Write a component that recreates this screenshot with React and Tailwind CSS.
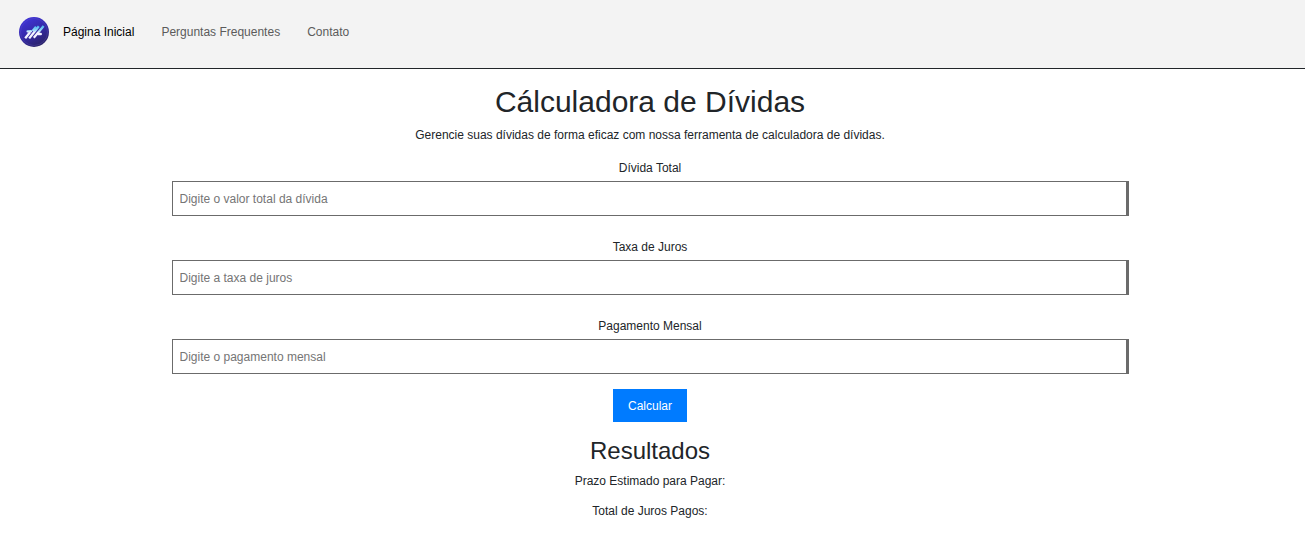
import { useState } from "react";

const links = ["Página Inicial", "Perguntas Frequentes", "Contato"];

const fields = [
  { id: "divida", label: "Dívida Total", placeholder: "Digite o valor total da dívida" },
  { id: "taxa", label: "Taxa de Juros", placeholder: "Digite a taxa de juros" },
  { id: "pagamento", label: "Pagamento Mensal", placeholder: "Digite o pagamento mensal" },
];

function Logo() {
  return (
    <svg viewBox="0 0 30 30" className="size-[30px]" aria-hidden="true">
      <defs>
        <linearGradient id="disc" x1="0.2" y1="0" x2="0.75" y2="1">
          <stop offset="0" stopColor="#4235dc" />
          <stop offset="0.5" stopColor="#3429a8" />
          <stop offset="1" stopColor="#2a2260" />
        </linearGradient>
        <linearGradient id="mark" x1="0" y1="8" x2="0" y2="22" gradientUnits="userSpaceOnUse">
          <stop offset="0.1" stopColor="#55b9f2" />
          <stop offset="0.35" stopColor="#8fd6f8" />
          <stop offset="0.55" stopColor="#f4f4ff" />
        </linearGradient>
      </defs>
      <circle cx="15" cy="15" r="15" fill="url(#disc)" />
      <circle cx="15" cy="15" r="13.5" fill="none" stroke="#6a62c8" strokeOpacity="0.45" strokeWidth="0.6" />
      <g fill="none" stroke="url(#mark)" strokeWidth="2.3" strokeLinejoin="round">
        <path d="M6.2 21.2 L11.2 15" />
        <path d="M10.2 21.4 L19.8 9.2" />
        <path d="M13.6 14 L17 9.6" />
        <path d="M14.8 20.8 L24.6 9" />
        <path d="M8.6 14.4 L12 14.2" strokeLinecap="round" />
        <path d="M19.4 17.2 L21.8 17" strokeLinecap="round" />
      </g>
    </svg>
  );
}

export default function App() {
  const [values, setValues] = useState({ divida: "", taxa: "", pagamento: "" });
  const [result, setResult] = useState({ prazo: "", juros: "" });

  function calculate(event) {
    event.preventDefault();
    const debt = Number(values.divida);
    const rate = Number(values.taxa) / 100;
    const payment = Number(values.pagamento);
    if (!debt || !payment || payment <= debt * rate) return;
    const months = rate ? Math.ceil(-Math.log(1 - (debt * rate) / payment) / Math.log(1 + rate)) : Math.ceil(debt / payment);
    setResult({ prazo: `${months} meses`, juros: `R$ ${Math.max(0, months * payment - debt).toFixed(2)}` });
  }

  return (
    <div className="min-h-screen bg-white font-['Liberation_Sans',Arial,sans-serif] text-xs leading-[18px] text-[#212529]">
      <header className="border-b border-[#212529] bg-[#f3f3f3] pt-[17px] pb-[21px] pl-[19px]">
        <nav className="flex items-center gap-[14px]">
          <a href="#inicio" aria-label="Início"><Logo /></a>
          <ul className="flex gap-[27px]">
            {links.map((text, i) => (
              <li key={text}>
                <a href="#inicio" className={i === 0 ? "text-black" : "text-[#5b5b5b]"}>{text}</a>
              </li>
            ))}
          </ul>
        </nav>
      </header>
      <main className="flex flex-col items-center pt-[15px] pr-[5px] pb-6 text-center">
        <h1 className="mb-1.5 text-[30px] leading-9">Cálculadora de Dívidas</h1>
        <p>Gerencie suas dívidas de forma eficaz com nossa ferramenta de calculadora de dívidas.</p>
        <form onSubmit={calculate} className="mt-[15px] flex w-full max-w-[957px] flex-col items-center">
          <div className="flex w-full flex-col gap-[22px]">
            {fields.map((f) => (
              <div key={f.id} className="flex flex-col items-center gap-1">
                <label htmlFor={f.id}>{f.label}</label>
                <input
                  id={f.id}
                  inputMode="decimal"
                  placeholder={f.placeholder}
                  value={values[f.id]}
                  onChange={(e) => setValues({ ...values, [f.id]: e.target.value })}
                  className="h-[35px] w-full border border-r-3 border-[#6b6b6b] px-[7px] placeholder:text-[#757575]"
                />
              </div>
            ))}
          </div>
          <button type="submit" className="mt-[15px] h-[33px] bg-[#007bff] px-[15px] text-white">Calcular</button>
        </form>
        <section className="mt-[14px]">
          <h2 className="mb-[7px] text-2xl leading-[29px]">Resultados</h2>
          <p className="mb-3">Prazo Estimado para Pagar: {result.prazo}</p>
          <p>Total de Juros Pagos: {result.juros}</p>
        </section>
      </main>
    </div>
  );
}
